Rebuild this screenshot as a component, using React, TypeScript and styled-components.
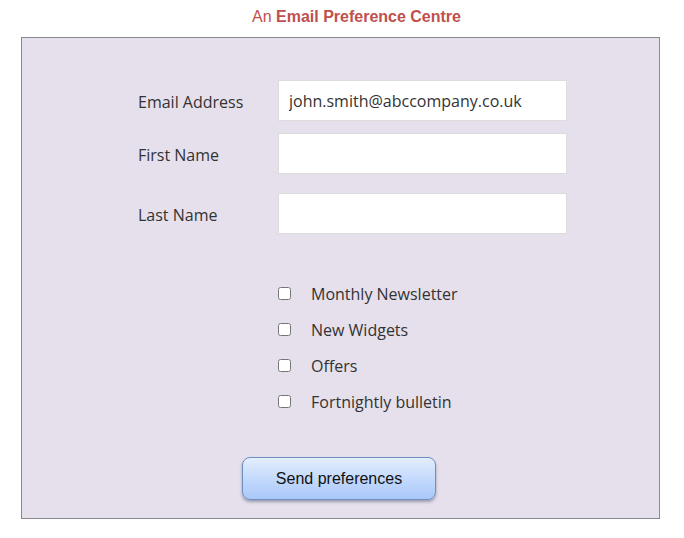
import styled, { createGlobalStyle } from "styled-components";

const GlobalStyle = createGlobalStyle`
  body {
    margin: 0;
    background: #ffffff;
    font-family: "Open Sans", "Liberation Sans", sans-serif;
  }
`;

const StyledPage = styled.div`
  width: 684px;
  height: 538px;
  padding: 0 0 0 21px;
  box-sizing: border-box;
`;

const StyledTitle = styled.h1`
  margin: 0;
  height: 37px;
  padding: 8px 0 0 231px;
  box-sizing: border-box;
  font-family: "Liberation Sans", Arial, sans-serif;
  font-size: 16px;
  font-weight: normal;
  color: #c0504d;
  line-height: 18px;

  strong {
    font-weight: bold;
  }
`;

const StyledPanel = styled.form`
  width: 639px;
  height: 482px;
  box-sizing: border-box;
  border: 1px solid #8a8a8e;
  background: #e6e0ec;
  padding: 42px 0 0 116px;
  display: flex;
  flex-direction: column;
`;

const StyledFieldRow = styled.div<{ $space: number }>`
  display: grid;
  grid-template-columns: 140px 289px;
  align-items: center;
  margin-top: ${(p) => p.$space}px;
`;

const StyledLabel = styled.label`
  font-size: 16px;
  color: #333333;
  padding-top: 3px;
`;

const StyledInput = styled.input`
  height: 41px;
  box-sizing: border-box;
  border: 1px solid #dcdcdc;
  background: #ffffff;
  padding: 0 10px;
  font-family: "Open Sans", "Liberation Sans", sans-serif;
  font-size: 16px;
  color: #333333;
  outline: none;
`;

const StyledOptions = styled.div`
  display: flex;
  flex-direction: column;
  gap: 17px;
  margin: 50px 0 0 140px;
`;

const StyledOption = styled.label`
  display: flex;
  align-items: center;
  height: 19px;
  font-size: 16px;
  color: #333333;
`;

const StyledCheckbox = styled.input`
  width: 13px;
  height: 13px;
  margin: 0 20px 0 0;
`;

const StyledButton = styled.button`
  align-self: flex-start;
  margin: 46px 0 0 104px;
  width: 194px;
  height: 43px;
  border: 1px solid #6f8fc0;
  border-radius: 8px;
  background: linear-gradient(#e4eefd, #c4dafc 50%, #a9c8f9);
  box-shadow: 0 2px 3px rgba(60, 70, 100, 0.45);
  font-family: "Liberation Sans", Arial, sans-serif;
  font-size: 16px;
  color: #111111;
  cursor: pointer;
`;

const fields = [
  { label: "Email Address", value: "john.smith@abccompany.co.uk", space: 0 },
  { label: "First Name", value: "", space: 12 },
  { label: "Last Name", value: "", space: 19 },
];

const options = ["Monthly Newsletter", "New Widgets", "Offers", "Fortnightly bulletin"];

const App = () => {
  return (
    <>
      <GlobalStyle />
      <StyledPage>
        <StyledTitle>
          An <strong>Email Preference Centre</strong>
        </StyledTitle>
        <StyledPanel onSubmit={(e) => e.preventDefault()}>
          {fields.map((field) => (
            <StyledFieldRow key={field.label} $space={field.space}>
              <StyledLabel>{field.label}</StyledLabel>
              <StyledInput type="text" defaultValue={field.value} />
            </StyledFieldRow>
          ))}
          <StyledOptions>
            {options.map((option) => (
              <StyledOption key={option}>
                <StyledCheckbox type="checkbox" />
                {option}
              </StyledOption>
            ))}
          </StyledOptions>
          <StyledButton type="submit">Send preferences</StyledButton>
        </StyledPanel>
      </StyledPage>
    </>
  );
};

export default App;
